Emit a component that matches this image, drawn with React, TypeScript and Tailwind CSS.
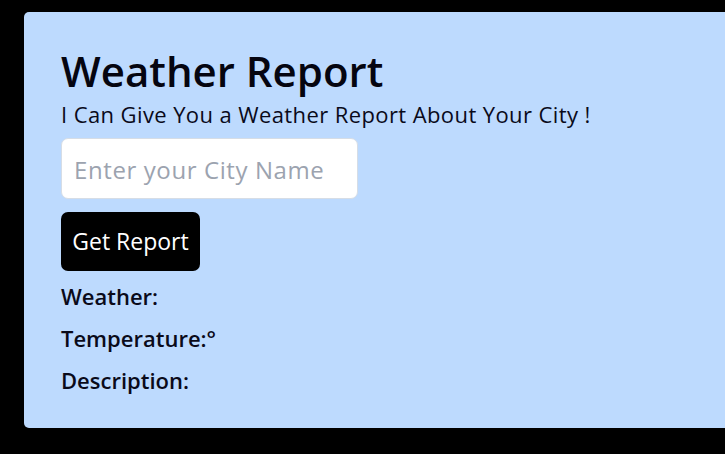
import React from "react";

export default function App() {
  return (
    <div className="min-h-[454px] w-[725px] bg-black pt-[12px] pl-[24px] overflow-hidden" style={{ fontFamily: '"Open Sans", "Noto Sans", sans-serif' }}>
      <div className="h-[416px] bg-[#bddafe] rounded-l-[5px] pl-[37px] pt-[38px] text-black">
        <h1 className="text-[42px] leading-[42px] font-semibold text-[#050510]">Weather Report</h1>
        <p className="mt-[10px] text-[22px] leading-[24px] tracking-[0.4px] text-[#0a0a1a]">I Can Give You a Weather Report About Your City !</p>
        <input
          type="text"
          placeholder="Enter your City Name"
          className="mt-[12px] block w-[297px] h-[61px] rounded-[7px] bg-white border border-[#d6dde6] pl-[12px] pr-[8px] pt-[2px] text-[24px] tracking-[0.6px] placeholder:text-[#9ca3af] outline-none"
        />
        <button className="mt-[13px] block w-[139px] h-[59px] rounded-[7px] bg-black text-white text-[23px]">Get Report</button>
        <div className="mt-[4px] text-[22px] leading-[42px] font-semibold text-[#0a0a1a]">
          <div>Weather: </div>
          <div>Temperature:°</div>
          <div>Description: </div>
        </div>
      </div>
    </div>
  );
}
